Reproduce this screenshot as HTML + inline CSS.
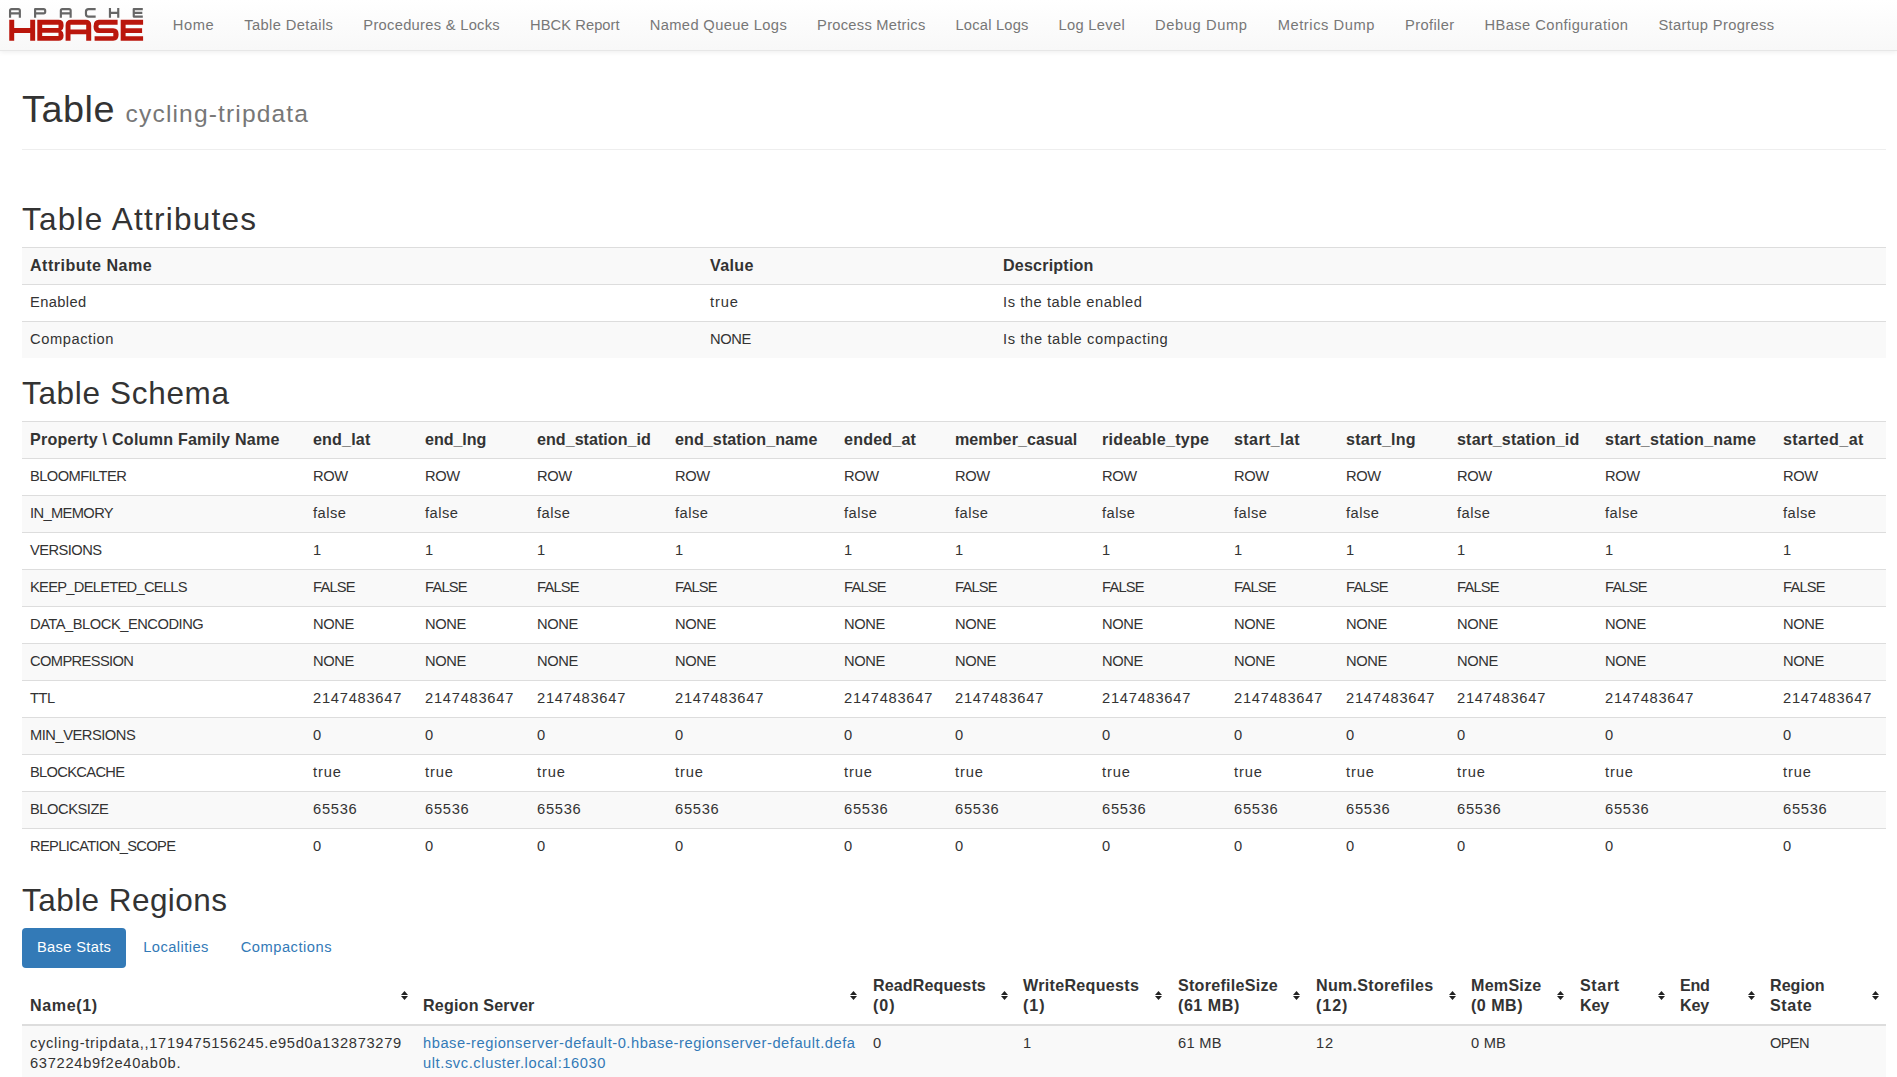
<!DOCTYPE html>
<html><head><meta charset="utf-8"><title>HBase Table</title><style>
html,body{margin:0;padding:0;background:#fff}
body{font-family:"Liberation Sans", sans-serif;font-size:14.700px;line-height:20px;color:#333;width:1897px;height:1077px;overflow:hidden;position:relative}
.navbar{position:absolute;left:0;top:0;width:1897px;height:50px;border-bottom:1px solid #e7e7e7;background:linear-gradient(to bottom,#fff 0,#f8f8f8 100%);box-shadow:inset 0 1px 0 rgba(255,255,255,.15),0 1px 5px rgba(0,0,0,.075);z-index:2}
.logo{position:absolute;left:0;top:0}
.nav{position:absolute;left:157.8px;top:0;white-space:nowrap;display:flex}
.nav a{display:block;padding:15px;line-height:20px;color:#777;text-shadow:0 1px 0 rgba(255,255,255,.25)}
.content{position:absolute;left:22px;top:50px;width:1864px}
h1{margin:40px 0 0;padding:0 0 9px;border-bottom:1px solid #eee;font-size:37.800px;line-height:39.6px;font-weight:500;color:#333;height:49.6px;box-sizing:border-box;height:auto}
h1 .h1in{display:block;margin-bottom:10px}
h1 small{font-size:65%;color:#777;font-weight:400;line-height:1}
h2{font-size:31.500px;line-height:33px;font-weight:500;margin:20px 0 10px;color:#333}
.table{border-collapse:collapse;border-spacing:0;table-layout:fixed;width:1864px;margin-bottom:20px}
.table td .t,.table th .t,h2 .t,.pills .t{position:relative;top:-1px}
.table td,.table th{padding:8px;line-height:20px;vertical-align:top;border-top:1px solid #ddd;text-align:left;white-space:nowrap;overflow:visible}
.table th{font-weight:bold;font-size:16.100px}
.st tbody tr:nth-of-type(odd){background:#f9f9f9}
.rt thead th{vertical-align:bottom;border-top:0;border-bottom:2px solid #ddd;position:relative}
.sort{position:absolute;right:8px;top:50%;margin-top:-4.5px;width:7px;height:9px;display:block}
.sh{position:relative;top:-1px}
.pills{list-style:none;margin:0;padding:0;display:flex;height:40px}
.pills li+li{margin-left:2px}
.pills a{display:block;padding:10px 15px;line-height:20px;border-radius:4px;color:#337ab7}
.pills .active a{background:#337ab7;color:#fff}
.lnk{color:#337ab7}
#h-attr{margin-top:54px}
</style></head><body><div class="navbar"><svg class="logo" width="160" height="50" viewBox="0 0 160 50">
<g fill="none" stroke="#666" stroke-width="2.15" stroke-linejoin="round">
<path d="M10.05 17.65 V10.6 Q10.05 9.05 11.6 9.05 H18.3 Q19.85 9.05 19.85 10.6 V17.65 M10.05 13.35 H19.85"/>
<path d="M35.1 17.65 V9.05 H43.6 Q45.2 9.05 45.2 10.7 V11.7 Q45.2 13.35 43.6 13.35 H35.1"/>
<path d="M60.85 17.65 V10.6 Q60.85 9.05 62.4 9.05 H69.1 Q70.65 9.05 70.65 10.6 V17.65 M60.85 13.35 H70.65"/>
<path d="M95.66 9.05 H88.6 Q85.95 9.05 85.95 11.7 V13.95 Q85.95 16.6 88.6 16.6 H95.66"/>
<path d="M109.95 17.7 V8 M118.25 17.7 V8 M109.95 12.9 H118.25"/>
<path d="M142.8 9.05 H133.75 V16.6 H142.8 M133.75 12.9 H142.3"/>
</g>
<g fill="#ba160c" fill-rule="evenodd" transform="translate(0.3 0)">
<path d="M8.95 19.8 H13.9 V28.1 H29.9 V19.8 H34.85 V40.76 H29.9 V33.1 H13.9 V40.76 H8.95 Z"/>
<path d="M37 19.8 H58.3 Q63.25 19.8 63.25 24.8 V26.2 Q63.25 29.2 60.9 30.45 Q63.25 31.7 63.25 34.9 V35.76 Q63.25 40.76 58.3 40.76 H37 Z M41.9 24.8 H58.2 V28.07 H41.9 Z M41.9 32.8 H58.2 V36 H41.9 Z"/>
<path d="M65.3 40.76 V25.3 Q65.3 19.8 70.8 19.8 H85.4 Q90.9 19.8 90.9 25.3 V40.76 H85.9 V34.2 H70.2 V40.76 Z M70.2 24.8 H85.9 V29.5 H70.2 Z"/>
<path d="M117.3 19.8 V24.8 H99.5 Q98.1 24.8 98.1 26.5 Q98.1 28.2 99.5 28.2 H112.9 Q118.3 28.2 118.3 34.5 Q118.3 40.76 112.9 40.76 H94.3 V36.2 H113 V33.1 H98.6 Q93.25 33.1 93.25 26.45 Q93.25 19.8 98.6 19.8 Z"/>
<path d="M120.4 19.8 H142.8 V24.8 H125.3 V28.2 H141.8 V33.1 H125.3 V36.2 H142.8 V40.76 H120.4 Z"/>
</g></svg><div class="nav"><a><span class="t" id="t0" style="letter-spacing:0.539px">Home</span></a><a><span class="t" id="t1" style="letter-spacing:0.393px">Table Details</span></a><a><span class="t" id="t2" style="letter-spacing:0.290px">Procedures &amp; Locks</span></a><a><span class="t" id="t3" style="letter-spacing:0.067px">HBCK Report</span></a><a><span class="t" id="t4" style="letter-spacing:0.370px">Named Queue Logs</span></a><a><span class="t" id="t5" style="letter-spacing:0.261px">Process Metrics</span></a><a><span class="t" id="t6" style="letter-spacing:0.200px">Local Logs</span></a><a><span class="t" id="t7" style="letter-spacing:0.302px">Log Level</span></a><a><span class="t" id="t8" style="letter-spacing:0.613px">Debug Dump</span></a><a><span class="t" id="t9" style="letter-spacing:0.572px">Metrics Dump</span></a><a><span class="t" id="t10" style="letter-spacing:0.346px">Profiler</span></a><a><span class="t" id="t11" style="letter-spacing:0.446px">HBase Configuration</span></a><a><span class="t" id="t12" style="letter-spacing:0.371px">Startup Progress</span></a></div></div>
<div class="content">
<h1><span class="h1in"><span class="t" id="t209" style="letter-spacing:0.547px">Table</span> <small><span class="t" id="t210" style="letter-spacing:1.144px">cycling-tripdata</span></small></span></h1>
<h2 id="h-attr"><span class="t" id="t211" style="letter-spacing:1.240px">Table Attributes</span></h2>
<table class="table st"><colgroup><col style="width:680px"><col style="width:293px"><col style="width:891px"></colgroup><tbody><tr><th><span class="t" id="t13" style="letter-spacing:0.491px">Attribute Name</span></th><th><span class="t" id="t14" style="letter-spacing:0.344px">Value</span></th><th><span class="t" id="t15" style="letter-spacing:0.185px">Description</span></th></tr><tr><td><span class="t" id="t16" style="letter-spacing:0.382px">Enabled</span></td><td><span class="t" id="t17" style="letter-spacing:0.855px">true</span></td><td><span class="t" id="t18" style="letter-spacing:0.567px">Is the table enabled</span></td></tr><tr><td><span class="t" id="t19" style="letter-spacing:0.559px">Compaction</span></td><td><span class="t" id="t20" style="letter-spacing:-0.406px">NONE</span></td><td><span class="t" id="t21" style="letter-spacing:0.625px">Is the table compacting</span></td></tr></tbody></table>
<h2><span class="t" id="t212" style="letter-spacing:0.676px">Table Schema</span></h2>
<table class="table st"><colgroup><col style="width:283px"><col style="width:112px"><col style="width:112px"><col style="width:138px"><col style="width:169px"><col style="width:111px"><col style="width:147px"><col style="width:132px"><col style="width:112px"><col style="width:111px"><col style="width:148px"><col style="width:178px"><col style="width:111px"></colgroup><tbody><tr><th><span class="t" id="t22" style="letter-spacing:0.219px">Property \ Column Family Name</span></th><th><span class="t" id="t23" style="letter-spacing:0.152px">end_lat</span></th><th><span class="t" id="t24" style="letter-spacing:-0.060px">end_lng</span></th><th><span class="t" id="t25" style="letter-spacing:0.020px">end_station_id</span></th><th><span class="t" id="t26" style="letter-spacing:0.076px">end_station_name</span></th><th><span class="t" id="t27" style="letter-spacing:0.184px">ended_at</span></th><th><span class="t" id="t28" style="letter-spacing:0.055px">member_casual</span></th><th><span class="t" id="t29" style="letter-spacing:0.274px">rideable_type</span></th><th><span class="t" id="t30" style="letter-spacing:0.377px">start_lat</span></th><th><span class="t" id="t31" style="letter-spacing:0.210px">start_lng</span></th><th><span class="t" id="t32" style="letter-spacing:0.163px">start_station_id</span></th><th><span class="t" id="t33" style="letter-spacing:0.197px">start_station_name</span></th><th><span class="t" id="t34" style="letter-spacing:0.380px">started_at</span></th></tr><tr><td><span class="t" id="t35" style="letter-spacing:-0.578px">BLOOMFILTER</span></td><td><span class="t" id="t36" style="letter-spacing:-0.438px">ROW</span></td><td><span class="t" id="t37" style="letter-spacing:-0.438px">ROW</span></td><td><span class="t" id="t38" style="letter-spacing:-0.438px">ROW</span></td><td><span class="t" id="t39" style="letter-spacing:-0.438px">ROW</span></td><td><span class="t" id="t40" style="letter-spacing:-0.438px">ROW</span></td><td><span class="t" id="t41" style="letter-spacing:-0.438px">ROW</span></td><td><span class="t" id="t42" style="letter-spacing:-0.438px">ROW</span></td><td><span class="t" id="t43" style="letter-spacing:-0.438px">ROW</span></td><td><span class="t" id="t44" style="letter-spacing:-0.438px">ROW</span></td><td><span class="t" id="t45" style="letter-spacing:-0.438px">ROW</span></td><td><span class="t" id="t46" style="letter-spacing:-0.438px">ROW</span></td><td><span class="t" id="t47" style="letter-spacing:-0.438px">ROW</span></td></tr><tr><td><span class="t" id="t48" style="letter-spacing:-0.630px">IN_MEMORY</span></td><td><span class="t" id="t49" style="letter-spacing:0.456px">false</span></td><td><span class="t" id="t50" style="letter-spacing:0.456px">false</span></td><td><span class="t" id="t51" style="letter-spacing:0.456px">false</span></td><td><span class="t" id="t52" style="letter-spacing:0.456px">false</span></td><td><span class="t" id="t53" style="letter-spacing:0.456px">false</span></td><td><span class="t" id="t54" style="letter-spacing:0.456px">false</span></td><td><span class="t" id="t55" style="letter-spacing:0.456px">false</span></td><td><span class="t" id="t56" style="letter-spacing:0.456px">false</span></td><td><span class="t" id="t57" style="letter-spacing:0.456px">false</span></td><td><span class="t" id="t58" style="letter-spacing:0.456px">false</span></td><td><span class="t" id="t59" style="letter-spacing:0.456px">false</span></td><td><span class="t" id="t60" style="letter-spacing:0.456px">false</span></td></tr><tr><td><span class="t" id="t61" style="letter-spacing:-0.545px">VERSIONS</span></td><td><span class="t" id="t62" style="letter-spacing:0.750px">1</span></td><td><span class="t" id="t63" style="letter-spacing:0.750px">1</span></td><td><span class="t" id="t64" style="letter-spacing:0.750px">1</span></td><td><span class="t" id="t65" style="letter-spacing:0.750px">1</span></td><td><span class="t" id="t66" style="letter-spacing:0.750px">1</span></td><td><span class="t" id="t67" style="letter-spacing:0.750px">1</span></td><td><span class="t" id="t68" style="letter-spacing:0.750px">1</span></td><td><span class="t" id="t69" style="letter-spacing:0.750px">1</span></td><td><span class="t" id="t70" style="letter-spacing:0.750px">1</span></td><td><span class="t" id="t71" style="letter-spacing:0.750px">1</span></td><td><span class="t" id="t72" style="letter-spacing:0.750px">1</span></td><td><span class="t" id="t73" style="letter-spacing:0.750px">1</span></td></tr><tr><td><span class="t" id="t74" style="letter-spacing:-0.719px">KEEP_DELETED_CELLS</span></td><td><span class="t" id="t75" style="letter-spacing:-0.766px">FALSE</span></td><td><span class="t" id="t76" style="letter-spacing:-0.766px">FALSE</span></td><td><span class="t" id="t77" style="letter-spacing:-0.766px">FALSE</span></td><td><span class="t" id="t78" style="letter-spacing:-0.766px">FALSE</span></td><td><span class="t" id="t79" style="letter-spacing:-0.766px">FALSE</span></td><td><span class="t" id="t80" style="letter-spacing:-0.766px">FALSE</span></td><td><span class="t" id="t81" style="letter-spacing:-0.766px">FALSE</span></td><td><span class="t" id="t82" style="letter-spacing:-0.766px">FALSE</span></td><td><span class="t" id="t83" style="letter-spacing:-0.766px">FALSE</span></td><td><span class="t" id="t84" style="letter-spacing:-0.766px">FALSE</span></td><td><span class="t" id="t85" style="letter-spacing:-0.766px">FALSE</span></td><td><span class="t" id="t86" style="letter-spacing:-0.766px">FALSE</span></td></tr><tr><td><span class="t" id="t87" style="letter-spacing:-0.473px">DATA_BLOCK_ENCODING</span></td><td><span class="t" id="t88" style="letter-spacing:-0.406px">NONE</span></td><td><span class="t" id="t89" style="letter-spacing:-0.406px">NONE</span></td><td><span class="t" id="t90" style="letter-spacing:-0.406px">NONE</span></td><td><span class="t" id="t91" style="letter-spacing:-0.406px">NONE</span></td><td><span class="t" id="t92" style="letter-spacing:-0.406px">NONE</span></td><td><span class="t" id="t93" style="letter-spacing:-0.406px">NONE</span></td><td><span class="t" id="t94" style="letter-spacing:-0.406px">NONE</span></td><td><span class="t" id="t95" style="letter-spacing:-0.406px">NONE</span></td><td><span class="t" id="t96" style="letter-spacing:-0.406px">NONE</span></td><td><span class="t" id="t97" style="letter-spacing:-0.406px">NONE</span></td><td><span class="t" id="t98" style="letter-spacing:-0.406px">NONE</span></td><td><span class="t" id="t99" style="letter-spacing:-0.406px">NONE</span></td></tr><tr><td><span class="t" id="t100" style="letter-spacing:-0.625px">COMPRESSION</span></td><td><span class="t" id="t101" style="letter-spacing:-0.406px">NONE</span></td><td><span class="t" id="t102" style="letter-spacing:-0.406px">NONE</span></td><td><span class="t" id="t103" style="letter-spacing:-0.406px">NONE</span></td><td><span class="t" id="t104" style="letter-spacing:-0.406px">NONE</span></td><td><span class="t" id="t105" style="letter-spacing:-0.406px">NONE</span></td><td><span class="t" id="t106" style="letter-spacing:-0.406px">NONE</span></td><td><span class="t" id="t107" style="letter-spacing:-0.406px">NONE</span></td><td><span class="t" id="t108" style="letter-spacing:-0.406px">NONE</span></td><td><span class="t" id="t109" style="letter-spacing:-0.406px">NONE</span></td><td><span class="t" id="t110" style="letter-spacing:-0.406px">NONE</span></td><td><span class="t" id="t111" style="letter-spacing:-0.406px">NONE</span></td><td><span class="t" id="t112" style="letter-spacing:-0.406px">NONE</span></td></tr><tr><td><span class="t" id="t113" style="letter-spacing:-0.484px">TTL</span></td><td><span class="t" id="t114" style="letter-spacing:0.739px">2147483647</span></td><td><span class="t" id="t115" style="letter-spacing:0.739px">2147483647</span></td><td><span class="t" id="t116" style="letter-spacing:0.739px">2147483647</span></td><td><span class="t" id="t117" style="letter-spacing:0.739px">2147483647</span></td><td><span class="t" id="t118" style="letter-spacing:0.739px">2147483647</span></td><td><span class="t" id="t119" style="letter-spacing:0.739px">2147483647</span></td><td><span class="t" id="t120" style="letter-spacing:0.739px">2147483647</span></td><td><span class="t" id="t121" style="letter-spacing:0.739px">2147483647</span></td><td><span class="t" id="t122" style="letter-spacing:0.739px">2147483647</span></td><td><span class="t" id="t123" style="letter-spacing:0.739px">2147483647</span></td><td><span class="t" id="t124" style="letter-spacing:0.739px">2147483647</span></td><td><span class="t" id="t125" style="letter-spacing:0.739px">2147483647</span></td></tr><tr><td><span class="t" id="t126" style="letter-spacing:-0.482px">MIN_VERSIONS</span></td><td><span class="t" id="t127" style="letter-spacing:0.750px">0</span></td><td><span class="t" id="t128" style="letter-spacing:0.750px">0</span></td><td><span class="t" id="t129" style="letter-spacing:0.750px">0</span></td><td><span class="t" id="t130" style="letter-spacing:0.750px">0</span></td><td><span class="t" id="t131" style="letter-spacing:0.750px">0</span></td><td><span class="t" id="t132" style="letter-spacing:0.750px">0</span></td><td><span class="t" id="t133" style="letter-spacing:0.750px">0</span></td><td><span class="t" id="t134" style="letter-spacing:0.750px">0</span></td><td><span class="t" id="t135" style="letter-spacing:0.750px">0</span></td><td><span class="t" id="t136" style="letter-spacing:0.750px">0</span></td><td><span class="t" id="t137" style="letter-spacing:0.750px">0</span></td><td><span class="t" id="t138" style="letter-spacing:0.750px">0</span></td></tr><tr><td><span class="t" id="t139" style="letter-spacing:-0.684px">BLOCKCACHE</span></td><td><span class="t" id="t140" style="letter-spacing:0.855px">true</span></td><td><span class="t" id="t141" style="letter-spacing:0.855px">true</span></td><td><span class="t" id="t142" style="letter-spacing:0.855px">true</span></td><td><span class="t" id="t143" style="letter-spacing:0.855px">true</span></td><td><span class="t" id="t144" style="letter-spacing:0.855px">true</span></td><td><span class="t" id="t145" style="letter-spacing:0.855px">true</span></td><td><span class="t" id="t146" style="letter-spacing:0.855px">true</span></td><td><span class="t" id="t147" style="letter-spacing:0.855px">true</span></td><td><span class="t" id="t148" style="letter-spacing:0.855px">true</span></td><td><span class="t" id="t149" style="letter-spacing:0.855px">true</span></td><td><span class="t" id="t150" style="letter-spacing:0.855px">true</span></td><td><span class="t" id="t151" style="letter-spacing:0.855px">true</span></td></tr><tr><td><span class="t" id="t152" style="letter-spacing:-0.455px">BLOCKSIZE</span></td><td><span class="t" id="t153" style="letter-spacing:0.737px">65536</span></td><td><span class="t" id="t154" style="letter-spacing:0.737px">65536</span></td><td><span class="t" id="t155" style="letter-spacing:0.737px">65536</span></td><td><span class="t" id="t156" style="letter-spacing:0.737px">65536</span></td><td><span class="t" id="t157" style="letter-spacing:0.737px">65536</span></td><td><span class="t" id="t158" style="letter-spacing:0.737px">65536</span></td><td><span class="t" id="t159" style="letter-spacing:0.737px">65536</span></td><td><span class="t" id="t160" style="letter-spacing:0.737px">65536</span></td><td><span class="t" id="t161" style="letter-spacing:0.737px">65536</span></td><td><span class="t" id="t162" style="letter-spacing:0.737px">65536</span></td><td><span class="t" id="t163" style="letter-spacing:0.737px">65536</span></td><td><span class="t" id="t164" style="letter-spacing:0.737px">65536</span></td></tr><tr><td><span class="t" id="t165" style="letter-spacing:-0.652px">REPLICATION_SCOPE</span></td><td><span class="t" id="t166" style="letter-spacing:0.750px">0</span></td><td><span class="t" id="t167" style="letter-spacing:0.750px">0</span></td><td><span class="t" id="t168" style="letter-spacing:0.750px">0</span></td><td><span class="t" id="t169" style="letter-spacing:0.750px">0</span></td><td><span class="t" id="t170" style="letter-spacing:0.750px">0</span></td><td><span class="t" id="t171" style="letter-spacing:0.750px">0</span></td><td><span class="t" id="t172" style="letter-spacing:0.750px">0</span></td><td><span class="t" id="t173" style="letter-spacing:0.750px">0</span></td><td><span class="t" id="t174" style="letter-spacing:0.750px">0</span></td><td><span class="t" id="t175" style="letter-spacing:0.750px">0</span></td><td><span class="t" id="t176" style="letter-spacing:0.750px">0</span></td><td><span class="t" id="t177" style="letter-spacing:0.750px">0</span></td></tr></tbody></table>
<h2><span class="t" id="t213" style="letter-spacing:0.447px">Table Regions</span></h2>
<ul class="pills"><li class="active"><a><span class="t" id="t206" style="letter-spacing:0.325px">Base Stats</span></a></li><li><a><span class="t" id="t207" style="letter-spacing:0.423px">Localities</span></a></li><li><a><span class="t" id="t208" style="letter-spacing:0.504px">Compactions</span></a></li></ul>
<table class="table st rt"><colgroup><col style="width:393px"><col style="width:450px"><col style="width:150px"><col style="width:155px"><col style="width:138px"><col style="width:155px"><col style="width:109px"><col style="width:100px"><col style="width:90px"><col style="width:124px"></colgroup><thead><tr><th><span class="t" id="t178" style="letter-spacing:0.612px">Name(1)</span><svg style="right:7px" class="sort" width="7" height="9" viewBox="0 0 7 9"><path d="M0 4 L3.5 0 L7 4 Z M0 5 L7 5 L3.5 9 Z" fill="#222"/></svg></th><th><span class="t" id="t179" style="letter-spacing:0.186px">Region Server</span><svg style="right:8px" class="sort" width="7" height="9" viewBox="0 0 7 9"><path d="M0 4 L3.5 0 L7 4 Z M0 5 L7 5 L3.5 9 Z" fill="#222"/></svg></th><th><span class="t" id="t180" style="letter-spacing:0.089px">ReadRequests</span><br><span class="t" id="t181" style="letter-spacing:0.958px">(0)</span><svg style="right:7px" class="sort" width="7" height="9" viewBox="0 0 7 9"><path d="M0 4 L3.5 0 L7 4 Z M0 5 L7 5 L3.5 9 Z" fill="#222"/></svg></th><th><span class="t" id="t182" style="letter-spacing:0.294px">WriteRequests</span><br><span class="t" id="t183" style="letter-spacing:0.958px">(1)</span><svg style="right:8px" class="sort" width="7" height="9" viewBox="0 0 7 9"><path d="M0 4 L3.5 0 L7 4 Z M0 5 L7 5 L3.5 9 Z" fill="#222"/></svg></th><th><span class="t" id="t184" style="letter-spacing:0.261px">StorefileSize</span><br><span class="t" id="t185" style="letter-spacing:0.520px">(61 MB)</span><svg style="right:8px" class="sort" width="7" height="9" viewBox="0 0 7 9"><path d="M0 4 L3.5 0 L7 4 Z M0 5 L7 5 L3.5 9 Z" fill="#222"/></svg></th><th><span class="t" id="t186" style="letter-spacing:0.272px">Num.Storefiles</span><br><span class="t" id="t187" style="letter-spacing:0.914px">(12)</span><svg style="right:7px" class="sort" width="7" height="9" viewBox="0 0 7 9"><path d="M0 4 L3.5 0 L7 4 Z M0 5 L7 5 L3.5 9 Z" fill="#222"/></svg></th><th><span class="t" id="t188" style="letter-spacing:0.239px">MemSize</span><br><span class="t" id="t189" style="letter-spacing:0.474px">(0 MB)</span><svg style="right:8px" class="sort" width="7" height="9" viewBox="0 0 7 9"><path d="M0 4 L3.5 0 L7 4 Z M0 5 L7 5 L3.5 9 Z" fill="#222"/></svg></th><th><span class="t" id="t190" style="letter-spacing:0.631px">Start</span><br><span class="t" id="t191" style="letter-spacing:-0.099px">Key</span><svg style="right:7px" class="sort" width="7" height="9" viewBox="0 0 7 9"><path d="M0 4 L3.5 0 L7 4 Z M0 5 L7 5 L3.5 9 Z" fill="#222"/></svg></th><th><span class="t" id="t192" style="letter-spacing:-0.281px">End</span><br><span class="t" id="t193" style="letter-spacing:-0.099px">Key</span><svg style="right:7px" class="sort" width="7" height="9" viewBox="0 0 7 9"><path d="M0 4 L3.5 0 L7 4 Z M0 5 L7 5 L3.5 9 Z" fill="#222"/></svg></th><th><span class="t" id="t194" style="letter-spacing:0.023px">Region</span><br><span class="t" id="t195" style="letter-spacing:0.613px">State</span><svg style="right:7px" class="sort" width="7" height="9" viewBox="0 0 7 9"><path d="M0 4 L3.5 0 L7 4 Z M0 5 L7 5 L3.5 9 Z" fill="#222"/></svg></th></tr></thead><tbody><tr><td><span class="t" id="t196" style="letter-spacing:0.685px">cycling-tripdata,,1719475156245.e95d0a132873279</span><br><span class="t" id="t197" style="letter-spacing:0.686px">637224b9f2e40ab0b.</span></td><td><a class="lnk"><span class="t" id="t198" style="letter-spacing:0.527px">hbase-regionserver-default-0.hbase-regionserver-default.defa</span><br><span class="t" id="t199" style="letter-spacing:0.583px">ult.svc.cluster.local:16030</span></a></td><td><span class="t" id="t200" style="letter-spacing:0.750px">0</span></td><td><span class="t" id="t201" style="letter-spacing:0.750px">1</span></td><td><span class="t" id="t202" style="letter-spacing:0.300px">61 MB</span></td><td><span class="t" id="t203" style="letter-spacing:0.742px">12</span></td><td><span class="t" id="t204" style="letter-spacing:0.191px">0 MB</span></td><td></td><td></td><td><span class="t" id="t205" style="letter-spacing:-0.711px">OPEN</span></td></tr></tbody></table>
</div></body></html>
